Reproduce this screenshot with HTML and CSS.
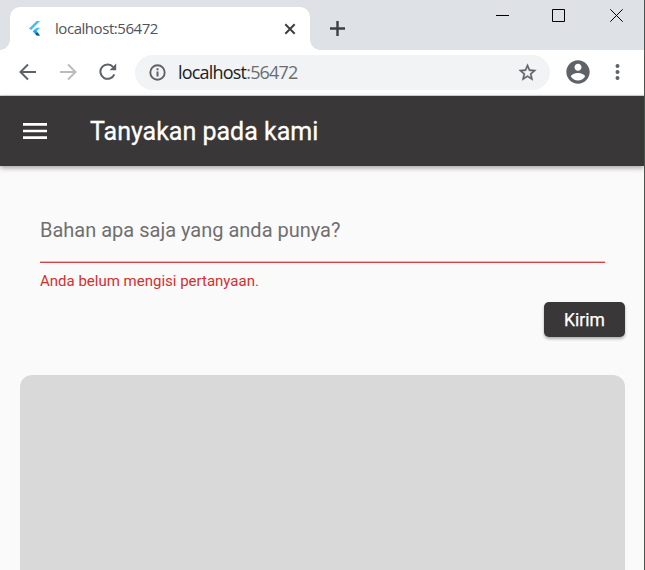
FILE: index.html
```html
<!DOCTYPE html>
<html lang="id">
<head>
<meta charset="utf-8">
<title>Tanyakan pada kami</title>
<link rel="stylesheet" href="styles.css">
</head>
<body>
<div class="window">
  <div class="tabstrip">
    <div class="tab">
      <svg class="favicon" width="16" height="16" viewBox="0 0 16 16"><path fill="#42bdf5" d="M8.700 0H12L3.100 9 1 7.400zM8.600 6.700H12L8.300 10.400 12 14.400H8.700L4.800 10.400z"/><path fill="#01579b" d="M7 12.600 9.200 11 12 14.600H8.700z"/><path fill="#1fa9ee" d="M4.800 10.400 7 8.300 9.200 10.500 7 12.600z"/></svg>
      <span class="tab-title">localhost:56472</span>
      <svg class="tab-close" width="12" height="12" viewBox="0 0 12 12"><path d="M1.300 1.300 10.700 10.700M10.700 1.300 1.300 10.700"/></svg>
    </div>
    <svg class="new-tab" width="16" height="16" viewBox="0 0 16 16"><path d="M8.500 1V16M1 8.500H16"/></svg>
    <div class="controls">
      <svg width="13" height="13" viewBox="0 0 13 13"><path d="M0 6.500H13"/></svg>
      <svg width="13" height="13" viewBox="0 0 13 13"><path d="M.5 .5H12.500V12.500H.5z"/></svg>
      <svg width="13" height="13" viewBox="0 0 13 13"><path d="M.3 .3 12.700 12.700M12.700 .3 .3 12.700"/></svg>
    </div>
  </div>
  <div class="toolbar">
    <svg class="nav" width="18" height="18" viewBox="0 0 18 18"><path d="M17 9H2M9 1.500 1.500 9 9 16.500"/></svg>
    <svg class="nav muted" width="18" height="18" viewBox="0 0 18 18"><path d="M1 9H16M9 1.500 16.500 9 9 16.500"/></svg>
    <svg class="nav reload" width="18" height="18" viewBox="0 0 18 18"><path d="M15.300 11.300A7.200 7.200 0 1 1 14.200 4.100"/><path class="solid" d="M17.200 .6V7.300H10.500z"/></svg>
    <div class="address">
      <svg width="17" height="17" viewBox="0 0 17 17"><circle cx="8.500" cy="8.500" r="7.200" fill="none" stroke="#5f6368" stroke-width="1.900"/><path d="M7.500 7.500H9.500V12.600H7.500zM7.500 4.300H9.500V6.200H7.500z" fill="#5f6368"/></svg>
      <span class="url">localhost<span class="port">:56472</span></span>
      <svg class="star" width="21" height="21" viewBox="0 0 24 24"><path fill="#5f6368" stroke="#5f6368" stroke-width=".4" d="M22 9.240l-7.190-.62L12 2 9.190 8.630 2 9.240l5.460 4.730L5.820 21 12 17.270 18.180 21l-1.630-7.030L22 9.240zM12 15.400l-3.760 2.270 1-4.280-3.320-2.880 4.380-.38L12 6.100l1.710 4.040 4.380.38-3.320 2.880 1 4.280L12 15.400z"/></svg>
    </div>
    <svg class="profile" width="28" height="28" viewBox="0 0 24 24"><path fill="#5f6368" d="M12 2C6.480 2 2 6.480 2 12s4.480 10 10 10 10-4.480 10-10S17.520 2 12 2zm0 3c1.660 0 3 1.340 3 3s-1.340 3-3 3-3-1.340-3-3 1.340-3 3-3zm0 14.200c-2.500 0-4.710-1.280-6-3.220.030-1.990 4-3.080 6-3.080s5.970 1.090 6 3.080c-1.290 1.940-3.500 3.220-6 3.220z"/></svg>
    <svg class="more" width="5" height="16" viewBox="0 0 5 16"><g fill="#5f6368"><circle cx="2.500" cy="2" r="2"/><circle cx="2.500" cy="8" r="2"/><circle cx="2.500" cy="14" r="2"/></g></svg>
  </div>
  <header class="appbar">
    <svg width="24" height="16" viewBox="0 0 24 16"><path fill="#fff" d="M0 0H24V2.700H0zM0 6.700H24V9.300H0zM0 13.300H24V16H0z"/></svg>
    <h1>Tanyakan pada kami</h1>
  </header>
  <main>
    <div class="field">
      <div class="label">Bahan apa saja yang anda punya?</div>
      <div class="error">Anda belum mengisi pertanyaan.</div>
    </div>
    <button class="send" type="button">Kirim</button>
    <div class="answer"></div>
  </main>
</div>
</body>
</html>
```
FILE: styles.css
```css
* { box-sizing: border-box; }
body { margin: 0; background: #fafafa; font-family: Roboto, sans-serif; }
svg { display: block; flex: none; }
.window { height: 570px; overflow: hidden; border-right: 1px solid #46554e; display: flex; flex-direction: column; }
.tabstrip { height: 50px; flex: none; background: #dee1e6; display: flex; align-items: flex-start; }
.tab { position: relative; width: 300px; height: 43px; margin: 7px 0 0 10px; padding: 0 14px 0 18px; background: #fff; border-radius: 10px 10px 0 0; display: flex; align-items: center; }
.tab::before, .tab::after { content: ""; position: absolute; bottom: 0; width: 10px; height: 10px; }
.tab::before { left: -10px; background: radial-gradient(circle at 0 0, transparent 9.500px, #fff 10px); }
.tab::after { right: -10px; background: radial-gradient(circle at 100% 0, transparent 9.500px, #fff 10px); }
.tab-title { margin: -2px 0 0 11px; font: 400 15px/20px "Open Sans", sans-serif; color: #505357; letter-spacing: -.45px; }
.tab-close { margin-left: auto; fill: none; stroke: #3c4043; stroke-width: 2; }
.new-tab { margin: 20px 0 0 19px; fill: none; stroke: #3c4043; stroke-width: 2.400; }
.controls { display: flex; gap: 44px; margin: 9px 21px 0 auto; fill: none; stroke: #000; }
.controls svg:nth-child(2) { margin: 0 1px 0 -1px; }
.toolbar { height: 46px; flex: none; background: #fff; border-bottom: 1px solid #d5d8d9; display: flex; align-items: center; padding: 0 0 1px 19px; }
.nav { margin-right: 22px; fill: none; stroke: #5f6368; stroke-width: 2; }
.muted { stroke: #babcbe; }
.reload { margin-right: 18px; }
.solid { fill: #5f6368; stroke: none; }
.address { width: 415px; height: 35px; border-radius: 18px; background: #f1f3f4; display: flex; align-items: center; padding: 0 12px 0 14px; }
.url { margin-left: 12px; font: 400 18px/24px "Open Sans", sans-serif; color: #202124; letter-spacing: -.8px; }
.port { color: #6a6e73; }
.star { margin-left: auto; }
.profile { margin-left: 13.500px; }
.more { margin-left: 23.500px; }
.appbar { height: 70px; flex: none; background: #3a3738; display: flex; align-items: center; padding-left: 23px; box-shadow: 0 2px 5px rgba(0,0,0,.35); }
.appbar h1 { margin: 2px 0 0 43px; font-size: 25px; font-weight: 400; line-height: 30px; color: #fff; -webkit-text-stroke: .3px #fff; }
main { flex: 1; padding: 0 19px 0 20px; display: flex; flex-direction: column; }
.field { margin: 50px 20px 0; }
.label { height: 47px; border-bottom: 1px solid #d84343; box-shadow: inset 0 -1px #efb1b1; font-size: 20px; line-height: 28px; color: #6f6f6f; }
.error { margin-top: 9px; font-size: 15px; line-height: 18px; color: #d32f2f; }
.send { align-self: flex-end; width: 81px; height: 35px; margin-top: 12px; padding: 1px 0 0; border: 0; border-radius: 5px; background: #3a3738; color: #fff; font: 400 17.500px/34px Roboto, sans-serif; -webkit-text-stroke: .25px #fff; box-shadow: 0 2px 3px rgba(0,0,0,.3); }
.answer { flex: 1; margin-top: 38px; border-radius: 12px 12px 0 0; background: #d9d9d9; }
```
